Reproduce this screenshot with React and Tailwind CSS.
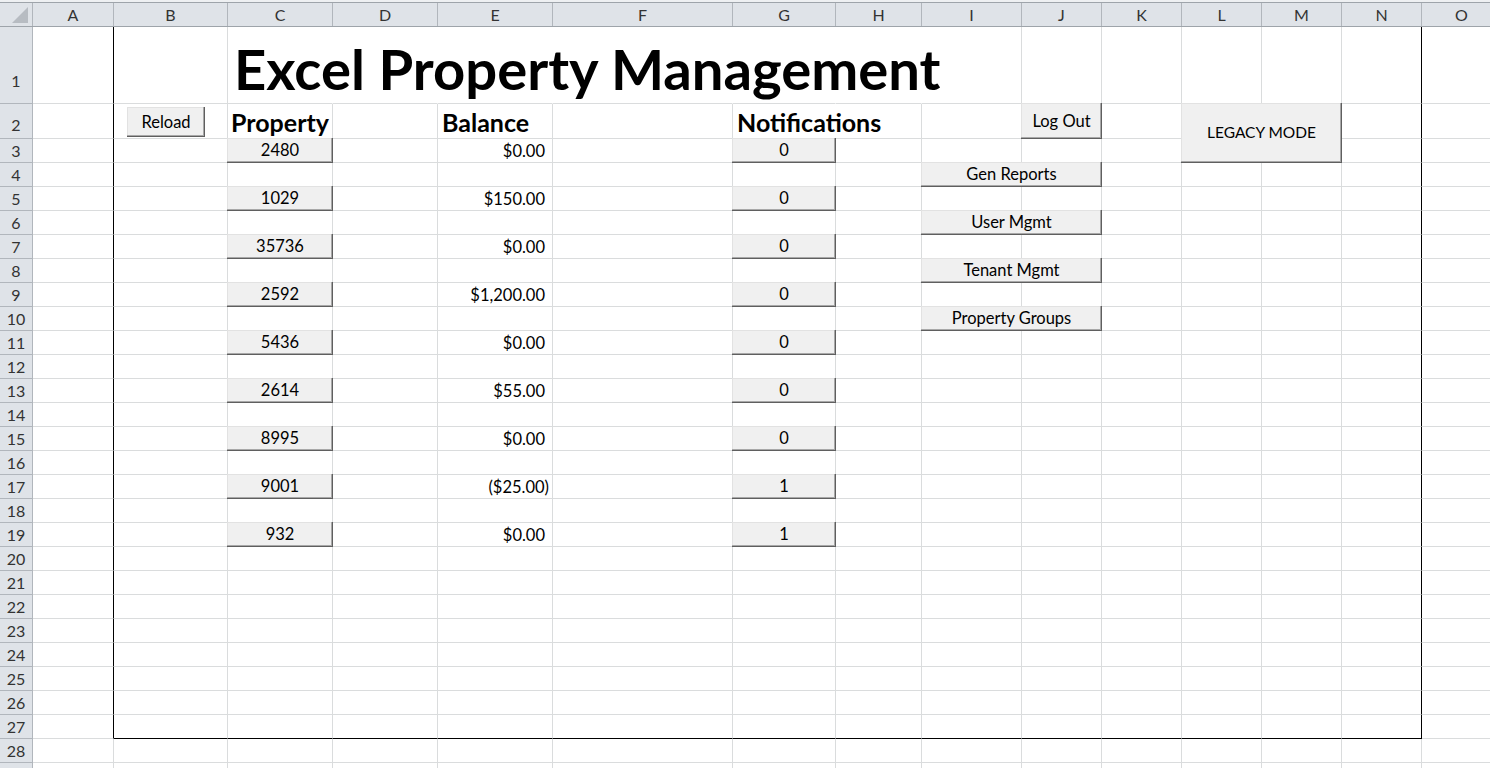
import React from 'react';

// column letters with their pixel widths (border included)
const COLS = [
  { name: 'A', w: 'w-[81px]' },
  { name: 'B', w: 'w-[114px]' },
  { name: 'C', w: 'w-[105px]' },
  { name: 'D', w: 'w-[105px]' },
  { name: 'E', w: 'w-[115px]' },
  { name: 'F', w: 'w-[180px]' },
  { name: 'G', w: 'w-[103px]' },
  { name: 'H', w: 'w-[86px]' },
  { name: 'I', w: 'w-[100px]' },
  { name: 'J', w: 'w-[80px]' },
  { name: 'K', w: 'w-[80px]' },
  { name: 'L', w: 'w-[80px]' },
  { name: 'M', w: 'w-[80px]' },
  { name: 'N', w: 'w-[80px]' },
  { name: 'O', w: 'w-[80px]' },
];

const PROPERTIES = [
  { id: '2480', balance: '$0.00', notes: '0' },
  { id: '1029', balance: '$150.00', notes: '0' },
  { id: '35736', balance: '$0.00', notes: '0' },
  { id: '2592', balance: '$1,200.00', notes: '0' },
  { id: '5436', balance: '$0.00', notes: '0' },
  { id: '2614', balance: '$55.00', notes: '0' },
  { id: '8995', balance: '$0.00', notes: '0' },
  { id: '9001', balance: '($25.00)', notes: '1' },
  { id: '932', balance: '$0.00', notes: '1' },
];

const SIDE_BUTTONS = { 4: 'Gen Reports', 6: 'User Mgmt', 8: 'Tenant Mgmt', 10: 'Property Groups' };

const btn =
  'absolute z-10 flex items-center justify-center bg-[#f0f0f0] text-black text-[16.5px] leading-none shadow-[inset_-1px_-1px_0_#5f5f5f,inset_-2px_-2px_0_#a8a8a8,inset_1px_1px_0_#e2e2e2]';

function rowHeight(r) {
  if (r === 1) return 'h-[77px]';
  if (r === 2) return 'h-[35px]';
  return 'h-[24px]';
}

function rowLabelPad(r) {
  if (r === 1) return 'pb-[14px]';
  if (r === 2) return 'pb-[5px]';
  return 'pb-[3px]';
}

function hasButton(r, c) {
  if (r === 2) return ['B', 'J', 'L'].includes(c);
  if (r >= 3 && r <= 19 && r % 2 === 1) return c === 'C' || c === 'G';
  return Boolean(SIDE_BUTTONS[r]) && c === 'I';
}

function CellContent({ r, c }) {
  if (r === 1 && c === 'C') {
    return (
      <span className="pl-[6px] pb-[6px] whitespace-nowrap font-bold text-[56.2px] leading-none">
        Excel Property Management
      </span>
    );
  }
  if (r === 2) {
    if (c === 'B') return <div className={`${btn} left-[13px] top-[3px] w-[78px] h-[30px]`}>Reload</div>;
    if (c === 'C') return <span className="pl-[3px] pb-[3px] font-bold text-[25px] leading-none whitespace-nowrap">Property</span>;
    if (c === 'E') return <span className="pl-[4px] pb-[3px] font-bold text-[25px] leading-none whitespace-nowrap">Balance</span>;
    if (c === 'G') return <span className="pl-[4px] pb-[3px] font-bold text-[25px] leading-none whitespace-nowrap">Notifications</span>;
    if (c === 'J') return <div className={`${btn} -left-px -top-px -right-px -bottom-px`}>Log Out</div>;
    if (c === 'L') return <div className={`${btn} -left-px -top-px w-[161px] h-[60px] !text-[15.5px]`}>LEGACY MODE</div>;
  }
  if (r >= 3 && r <= 19 && r % 2 === 1) {
    const p = PROPERTIES[(r - 3) / 2];
    if (c === 'C') return <div className={`${btn} -left-px -top-px -right-px -bottom-px`}>{p.id}</div>;
    if (c === 'E') {
      const paren = p.balance.startsWith('(');
      return (
        <span className={`w-full text-right pb-[3px] text-[16.5px] leading-none ${paren ? 'pr-[3px]' : 'pr-[7px]'}`}>
          {p.balance}
        </span>
      );
    }
    if (c === 'G') return <div className={`${btn} -left-px -top-px -right-px -bottom-px`}>{p.notes}</div>;
  }
  if (SIDE_BUTTONS[r] && c === 'I') {
    return <div className={`${btn} -left-px -top-px w-[181px] h-[25px]`}>{SIDE_BUTTONS[r]}</div>;
  }
  return null;
}

function SheetRow({ r }) {
  return (
    <div className={`flex ${rowHeight(r)}`}>
      <div
        className={`w-[33px] shrink-0 flex items-end justify-center ${rowLabelPad(r)} bg-[#dfe3e8] border-r border-b border-[#b1b6bc] text-[16px] leading-none text-[#333]`}
      >
        {r < 29 ? r : ''}
      </div>
      {COLS.map((col, i) => {
        const inFrame = r >= 1 && r <= 27;
        // overflowing text hides the grid lines it runs across
        const hideRight =
          (r === 1 && ['C', 'D', 'E', 'F', 'G', 'H'].includes(col.name)) || (r === 2 && col.name === 'G');
        let right = 'border-r-[#dadcdd]';
        if (hideRight) right = 'border-r-transparent';
        if (inFrame && (col.name === 'A' || col.name === 'N')) right = 'border-r-black';
        const bottom = r === 27 && i >= 1 && i <= 13 ? 'border-b-black' : 'border-b-[#dadcdd]';
        return (
          <div
            key={col.name}
            className={`${col.w} shrink-0 flex items-end border-r border-b ${right} ${bottom} ${hasButton(r, col.name) ? 'relative' : ''}`}
          >
            <CellContent r={r} c={col.name} />
          </div>
        );
      })}
    </div>
  );
}

export default function App() {
  const rows = Array.from({ length: 29 }, (_, i) => i + 1);
  return (
    <div className="w-[1490px] h-[768px] overflow-hidden bg-white font-['Lato',sans-serif] text-black">
      <div className="h-[2px] bg-[#eef0f2]" />
      <div className="flex h-[25px] bg-[#dfe3e8] border-t border-b border-[#9ea4aa]">
        <div className="w-[33px] shrink-0 relative border-r border-[#b1b6bc]">
          <svg className="absolute left-[12px] top-[4px]" width="16" height="16" viewBox="0 0 16 16">
            <polygon points="16,0 16,16 0,16" fill="#b7bcc2" />
          </svg>
        </div>
        {COLS.map((col) => (
          <div
            key={col.name}
            className={`${col.w} shrink-0 flex items-center justify-center border-r border-[#b1b6bc] text-[16px] text-[#333]`}
          >
            {col.name}
          </div>
        ))}
      </div>
      {rows.map((r) => (
        <SheetRow key={r} r={r} />
      ))}
    </div>
  );
}
